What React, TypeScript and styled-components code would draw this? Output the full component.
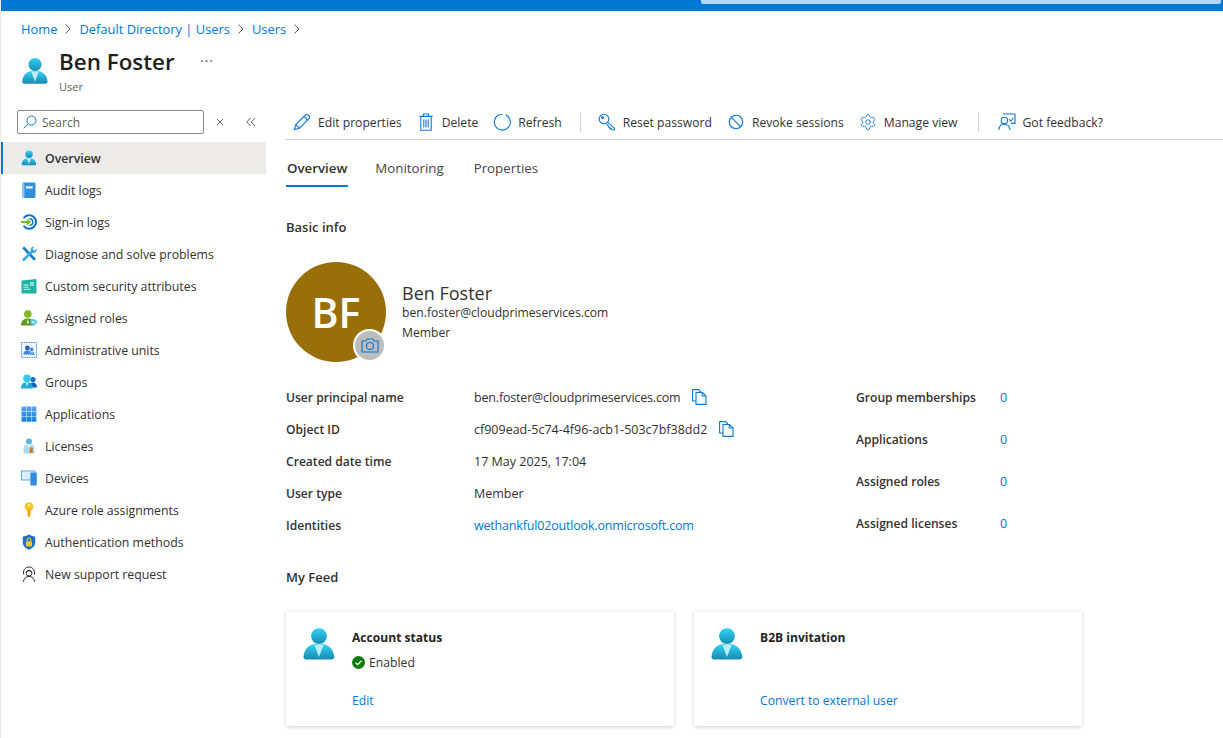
import React from 'react';
import styled, { createGlobalStyle } from 'styled-components';
import { Settings } from 'lucide-react';

const GlobalStyle = createGlobalStyle`
  html, body {
    margin: 0;
    padding: 0;
    height: 100%;
    overflow: hidden;
    background: #ffffff;
  }
  * { box-sizing: border-box; }
  body {
    font-family: "Open Sans", "Noto Sans", "Liberation Sans", sans-serif;
    font-size: 13px;
    color: #323130;
  }
`;

const BLUE = '#0078d4';

const PersonIcon = ({ size = 16, id }: { size?: number; id: string }) => (
  <svg width={size} height={size} viewBox="0 0 18 18">
    <defs>
      <linearGradient id={`${id}-a`} x1="0" y1="0" x2="0" y2="1">
        <stop offset="0" stopColor="#32d4f5" />
        <stop offset="1" stopColor="#198ab3" />
      </linearGradient>
      <linearGradient id={`${id}-b`} x1="0" y1="0" x2="0" y2="1">
        <stop offset="0" stopColor="#32d4f5" />
        <stop offset="1" stopColor="#1988b1" />
      </linearGradient>
    </defs>
    <path d="M15.7 17.2c.8 0 1.400-.6 1.400-1.400v-.2C16.500 11.700 14.300 8.900 9 8.900s-7.600 2.400-8.200 6.700c-.1.8.5 1.500 1.300 1.600h13.600z" fill={`url(#${id}-b)`} />
    <circle cx="9" cy="4.800" r="4.200" fill={`url(#${id}-a)`} />
    <path d="M9 15.900 6.600 9.500c.8-.3 1.600-.4 2.400-.4s1.600.1 2.400.4z" fill="#d5f5fb" opacity=".85" />
  </svg>
);

const AuditIcon = () => (
  <svg width="16" height="16" viewBox="0 0 16 16">
    <rect x="1.500" y="0.500" width="13" height="15.500" rx="1.400" fill="#2f8fdc" />
    <rect x="1.500" y="0.500" width="2" height="15.500" rx="1" fill="#8cc2ee" />
    <rect x="5" y="4.200" width="6.800" height="2.400" fill="#e8f3fc" />
  </svg>
);

const SignInIcon = () => (
  <svg width="16" height="16" viewBox="0 0 16 16" fill="none">
    <path d="M2.600 4.200A6.800 6.800 0 1 1 2.600 11.800" stroke="#0b6fc2" strokeWidth="2" />
    <path d="M8.500 4.700A3.300 3.300 0 0 1 8.500 11.300" stroke="#0b6fc2" strokeWidth="1.400" />
    <path d="M0 8h8.600M6 5.400 8.800 8 6 10.600" stroke="#76b82a" strokeWidth="1.800" />
  </svg>
);

const ToolsIcon = () => (
  <svg width="16" height="16" viewBox="0 0 16 16" fill="none">
    <path d="M2.200 1.400 14 13.800" stroke="#1c7fc9" strokeWidth="2.800" />
    <path d="M13.600 0.400a3.800 3.800 0 0 0-3.900 4.800L1 13.600l1.800 2 8.300-8.400a3.800 3.800 0 0 0 4.600-4.400l-2.200 2-1.900-1.800z" fill="#3ba7e6" />
  </svg>
);

const AttrIcon = () => (
  <svg width="16" height="16" viewBox="0 0 16 16">
    <path d="M0.500 2.500 15.500 1v13.400a1 1 0 0 1-1 1h-14z" fill="#1fb5a3" />
    <circle cx="11" cy="6" r="2" fill="#e8fbf8" />
    <circle cx="11" cy="6" r="1" fill="#1fb5a3" />
    <rect x="2.500" y="6.400" width="5" height="1" fill="#c8f3ec" />
    <rect x="2.500" y="8.600" width="5" height="1" fill="#c8f3ec" />
    <rect x="2.500" y="10.800" width="7" height="1" fill="#c8f3ec" />
  </svg>
);

const RolesIcon = () => (
  <svg width="16" height="16" viewBox="0 0 16 16">
    <circle cx="6.800" cy="4" r="3.800" fill="#7fba22" />
    <path d="M0 15.500c0-4.200 2.400-6.900 6.800-6.900S13.600 11.300 13.600 15.500z" fill="#5e9624" />
    <path d="M6.800 8.800 5.600 12.600 6.800 14l1.200-1.400z" fill="#d7efb0" />
    <path d="M9.300 10.200 12.200 8.800l3.600 1.600v3L12.200 15.600l-2.900-2z" fill="#50c7ee" />
    <path d="M10.800 11.200h3v2h-3z" fill="#bfeefb" />
  </svg>
);

const UnitsIcon = () => (
  <svg width="16" height="16" viewBox="0 0 16 16">
    <rect x="0.500" y="0.500" width="15" height="15" fill="#eef5fc" stroke="#3d8fdc" strokeDasharray="1.400 1" />
    <circle cx="6.400" cy="6" r="2.400" fill="#2364b8" />
    <path d="M2.400 12.600c0-2.800 1.800-4.200 4-4.200s4 1.400 4 4.200z" fill="#3f84db" />
    <circle cx="10.600" cy="7.400" r="1.900" fill="#4c8fe0" />
    <path d="M7.400 13c0-2.200 1.200-3.400 3.200-3.400s3.200 1.200 3.200 3.400z" fill="#6aa6e8" />
  </svg>
);

const GroupsIcon = () => (
  <svg width="16" height="16" viewBox="0 0 16 16">
    <circle cx="12" cy="5.600" r="2.600" fill="#1a6fd0" />
    <path d="M8.400 13.600c0-3.400 1.400-5 3.600-5s4 1.600 4 5z" fill="#1560b8" />
    <circle cx="6" cy="4.400" r="3.800" fill="#32c5ee" />
    <path d="M0 14.600c0-4.400 2.200-6.400 6-6.400s6 2 6 6.400z" fill="#22aad6" />
    <path d="M6 12.800 4.800 8.500h2.400z" fill="#d5f5fb" />
  </svg>
);

const AppsIcon = () => (
  <svg width="16" height="16" viewBox="0 0 16 16">
    <defs>
      <linearGradient id="apps-grad" x1="0" y1="0" x2="0" y2="16" gradientUnits="userSpaceOnUse">
        <stop offset="0" stopColor="#5ea7ee" />
        <stop offset="1" stopColor="#0d7ee0" />
      </linearGradient>
    </defs>
    {[0.500, 5.600, 10.700].flatMap(x =>
      [0.500, 5.700, 10.900].map(y => (
        <rect key={`${x}-${y}`} x={x} y={y} width="4.700" height="4.800" fill="url(#apps-grad)" />
      ))
    )}
  </svg>
);

const LicenseIcon = () => (
  <svg width="16" height="16" viewBox="0 0 16 16">
    <circle cx="8" cy="3.400" r="3" fill="#5eb4dc" />
    <path d="M2.600 15.600V9.400c0-1.400 1-2.400 2.400-2.400h6c1.400 0 2.400 1 2.400 2.400v6.200z" fill="#a6dcef" />
    <path d="M6.400 7.200 8.200 10l1.600-2.800z" fill="#e9f7fc" />
    <circle cx="10.200" cy="10.800" r="1.800" fill="#e8842a" />
    <path d="M8.800 11.600h2.800v4l-1.400-1-1.400 1z" fill="#d8681b" />
  </svg>
);

const DevicesIcon = () => (
  <svg width="16" height="16" viewBox="0 0 16 16">
    <rect x="0" y="0.500" width="14.400" height="10" fill="#5ea7e6" />
    <rect x="1" y="1.500" width="12.400" height="8" fill="#d9edfb" />
    <rect x="9.400" y="2.600" width="6.400" height="13" rx=".8" fill="#2f8be0" />
  </svg>
);

const KeyIcon = () => (
  <svg width="16" height="16" viewBox="0 0 16 16">
    <circle cx="8" cy="4.600" r="4.400" fill="#fcc419" />
    <path d="M6.500 7h3v5.200l-.8.8.6.8-1.300 1.800-1.500-1.400z" fill="#f2a50c" />
    <circle cx="8" cy="3.200" r="1.200" fill="#ffe99a" />
  </svg>
);

const ShieldIcon = () => (
  <svg width="16" height="16" viewBox="0 0 16 16">
    <path d="M8 0.300c1.600 1.400 3.600 2 6.200 2.200v6.200c0 3.400-3 5.600-6.200 7-3.200-1.400-6.200-3.600-6.200-7V2.500C4.400 2.300 6.400 1.700 8 0.300z" fill="#1f6fc4" />
    <path d="M5 7.400h6v5H5z" fill="#f8c72e" />
    <path d="M6.200 7.400V5.800a1.800 1.800 0 0 1 3.600 0v1.600" stroke="#f8c72e" strokeWidth="1.100" fill="none" />
  </svg>
);

const SupportIcon = () => (
  <svg width="16" height="16" viewBox="0 0 16 16" fill="none" stroke="#323130" strokeWidth="1">
    <path d="M2.800 8.600A5.600 5.600 0 1 1 13.200 8.600" />
    <path d="M5 6.800A3.200 3.200 0 0 1 11 6.800" />
    <circle cx="8" cy="7.200" r="2.800" />
    <path d="M2.400 15.800c.3-3.200 2.600-5.400 5.600-5.400s5.300 2.200 5.600 5.400" />
  </svg>
);

const NAV = [
  { label: 'Overview', icon: <PersonIcon id="nav" />, active: true },
  { label: 'Audit logs', icon: <AuditIcon /> },
  { label: 'Sign-in logs', icon: <SignInIcon /> },
  { label: 'Diagnose and solve problems', icon: <ToolsIcon /> },
  { label: 'Custom security attributes', icon: <AttrIcon /> },
  { label: 'Assigned roles', icon: <RolesIcon /> },
  { label: 'Administrative units', icon: <UnitsIcon /> },
  { label: 'Groups', icon: <GroupsIcon /> },
  { label: 'Applications', icon: <AppsIcon /> },
  { label: 'Licenses', icon: <LicenseIcon /> },
  { label: 'Devices', icon: <DevicesIcon /> },
  { label: 'Azure role assignments', icon: <KeyIcon /> },
  { label: 'Authentication methods', icon: <ShieldIcon /> },
  { label: 'New support request', icon: <SupportIcon /> },
];

const Line = ({ children, w = 18 }: { children: React.ReactNode; w?: number }) => (
  <svg width={w} height={w} viewBox="0 0 18 18" fill="none" stroke="#0f78d4" strokeWidth="1.100">
    {children}
  </svg>
);

const TOOLBAR_LEFT = [
  {
    label: 'Edit properties',
    icon: (
      <Line>
        <path d="M1.500 16.500 2.800 11.600 12.400 2a1.800 1.800 0 0 1 2.600 0l1 1a1.800 1.800 0 0 1 0 2.600L6.400 15.200z" />
        <path d="M2.800 11.600 6.400 15.200M11 3.400l3.600 3.600" />
      </Line>
    ),
  },
  {
    label: 'Delete',
    icon: (
      <Line>
        <path d="M2.400 3.400h13.200M6.400 3.400V1h5.200v2.400M3.800 3.400v13.800h10.400V3.400M6.800 6.400v8M9 6.400v8M11.200 6.400v8" />
      </Line>
    ),
  },
  {
    label: 'Refresh',
    icon: (
      <Line>
        <path d="M6.600 1.600A8 8 0 1 0 12.600 1.800" />
        <path d="M6.900 1.300 9.300 1.700" />
      </Line>
    ),
  },
];

const TOOLBAR_MID = [
  {
    label: 'Reset password',
    icon: (
      <Line>
        <circle cx="6" cy="6" r="4.800" />
        <path d="M9.600 9.200 16.600 15.400v1.400h-2.400l-1-1.200h-1.400v-1.400l-1.400-.2-.2-1.400-1.600-1.400" />
        <circle cx="4.600" cy="4.600" r="1" />
      </Line>
    ),
  },
  {
    label: 'Revoke sessions',
    icon: (
      <Line w={16}>
        <circle cx="9" cy="9" r="7.600" strokeWidth="1.300" />
        <path d="M3.800 3.800 14.200 14.200" strokeWidth="1.300" />
      </Line>
    ),
  },
  {
    label: 'Manage view',
    icon: <Settings size={18} color="#0f78d4" strokeWidth={1.200} />,
  },
];

const FEEDBACK = (
  <Line>
    <circle cx="6.400" cy="7.400" r="3.200" />
    <path d="M0.800 17c.2-3.600 2.400-5.800 5.600-5.800s5.200 2.200 5.600 5.800" />
    <path d="M5 1h12v9.400h-4M11 6.400l1.800 1.600 2.600-2.800" />
  </Line>
);

const INFO_ROWS: { label: string; value: string; copy?: boolean; link?: boolean; tight?: boolean }[] = [
  { label: 'User principal name', value: 'ben.foster@cloudprimeservices.com', copy: true, tight: true },
  { label: 'Object ID', value: 'cf909ead-5c74-4f96-acb1-503c7bf38dd2', copy: true },
  { label: 'Created date time', value: '17 May 2025, 17:04' },
  { label: 'User type', value: 'Member' },
  { label: 'Identities', value: 'wethankful02outlook.onmicrosoft.com', link: true, tight: true },
];

const COUNTS = ['Group memberships', 'Applications', 'Assigned roles', 'Assigned licenses'];

const Chevron = () => (
  <svg width="8" height="12" viewBox="0 0 8 12" fill="none" stroke="#605e5c" strokeWidth="1">
    <path d="M1.500 1.500 6 6l-4.500 4.500" />
  </svg>
);

const CopyIcon = () => (
  <svg width="15" height="16" viewBox="0 0 15 16" fill="none" stroke="#0f78d4" strokeWidth="1.100">
    <path d="M4 12H.6V.6h6L9 3" />
    <path d="M4 3.500h6.500l3.500 3.500v8.400H4zM10.200 3.500V7H14" />
  </svg>
);

export default function App() {
  return (
    <Page>
      <GlobalStyle />
      <TopBar>
        <TopSearch />
      </TopBar>
      <Breadcrumb>
        <Crumb>Home</Crumb>
        <Chevron />
        <Crumb>Default Directory | Users</Crumb>
        <Chevron />
        <Crumb>Users</Crumb>
        <Chevron />
      </Breadcrumb>
      <Header>
        <PersonIcon size={28} id="head" />
        <HeaderText>
          <Title>Ben Foster</Title>
          <SubTitle>User</SubTitle>
        </HeaderText>
        <Dots>···</Dots>
      </Header>
      <Body>
        <Sidebar>
          <SideTools>
            <SearchBox>
              <svg width="14" height="14" viewBox="0 0 14 14" fill="none" stroke="#0f78d4" strokeWidth="1">
                <circle cx="8.500" cy="5.500" r="4.500" />
                <path d="M5.200 8.800.8 13.200" />
              </svg>
              <span>Search</span>
            </SearchBox>
            <SideGlyph>
              <svg width="8" height="8" viewBox="0 0 8 8" fill="none" stroke="#605e5c">
                <path d="M1 1l6 6M7 1 1 7" />
              </svg>
            </SideGlyph>
            <SideGlyph>
              <svg width="10" height="10" viewBox="0 0 10 10" fill="none" stroke="#605e5c">
                <path d="M4.500 1 .8 5l3.700 4M9 1 5.300 5 9 9" />
              </svg>
            </SideGlyph>
          </SideTools>
          <Nav>
            {NAV.map(item => (
              <NavItem key={item.label} $active={item.active}>
                <NavIcon>{item.icon}</NavIcon>
                {item.label}
              </NavItem>
            ))}
          </Nav>
        </Sidebar>
        <Main>
          <Toolbar>
            {TOOLBAR_LEFT.map(b => (
              <ToolButton key={b.label}>
                <ToolIcon>{b.icon}</ToolIcon>
                {b.label}
              </ToolButton>
            ))}
            <ToolDivider />
            {TOOLBAR_MID.map(b => (
              <ToolButton key={b.label}>
                <ToolIcon>{b.icon}</ToolIcon>
                {b.label}
              </ToolButton>
            ))}
            <ToolDivider $wide />
            <ToolButton>
              <ToolIcon>{FEEDBACK}</ToolIcon>
              Got feedback?
            </ToolButton>
          </Toolbar>
          <Tabs>
            <Tab $active>Overview</Tab>
            <Tab>Monitoring</Tab>
            <Tab>Properties</Tab>
          </Tabs>
          <SectionTitle>Basic info</SectionTitle>
          <Profile>
            <Avatar>
              BF
              <CameraBadge>
                <svg width="18" height="15" viewBox="0 0 18 15" fill="none" stroke="#0f78d4" strokeWidth="1.200">
                  <path d="M1 3h4l1-2h6l1 2h4v11H1z" />
                  <circle cx="9" cy="8" r="3.500" />
                </svg>
              </CameraBadge>
            </Avatar>
            <ProfileText>
              <ProfileName>Ben Foster</ProfileName>
              <ProfileLine>ben.foster@cloudprimeservices.com</ProfileLine>
              <ProfileRole>Member</ProfileRole>
            </ProfileText>
          </Profile>
          <Details>
            <InfoTable>
              {INFO_ROWS.map(row => (
                <InfoRow key={row.label}>
                  <InfoLabel>{row.label}</InfoLabel>
                  <InfoValue $link={row.link} $tight={row.tight}>
                    <span>{row.value}</span>
                    {row.copy && <CopyIcon />}
                  </InfoValue>
                </InfoRow>
              ))}
            </InfoTable>
            <Counts>
              {COUNTS.map(label => (
                <CountRow key={label}>
                  <InfoLabel>{label}</InfoLabel>
                  <CountValue>0</CountValue>
                </CountRow>
              ))}
            </Counts>
          </Details>
          <FeedTitle>My Feed</FeedTitle>
          <Cards>
            <Card>
              <PersonIcon size={34} id="c1" />
              <CardBody>
                <CardTitle>Account status</CardTitle>
                <CardStatus>
                  <svg width="13" height="13" viewBox="0 0 13 13">
                    <circle cx="6.500" cy="6.500" r="6.500" fill="#107c10" />
                    <path d="M3.600 6.800 5.600 8.700 9.400 4.800" fill="none" stroke="#fff" strokeWidth="1.300" />
                  </svg>
                  Enabled
                </CardStatus>
                <CardLink>Edit</CardLink>
              </CardBody>
            </Card>
            <Card>
              <PersonIcon size={34} id="c2" />
              <CardBody>
                <CardTitle>B2B invitation</CardTitle>
                <CardStatus />
                <CardLink>Convert to external user</CardLink>
              </CardBody>
            </Card>
          </Cards>
        </Main>
      </Body>
    </Page>
  );
}

const Page = styled.div`
  width: 1223px;
  height: 738px;
  overflow: hidden;
  border-left: 1px solid #e8e8e8;
`;

const TopBar = styled.div`
  height: 11px;
  background: ${BLUE};
  display: flex;
  justify-content: flex-end;
  padding-right: 2px;
`;

const TopSearch = styled.div`
  width: 520px;
  height: 4px;
  background: #b3d6f5;
  border-radius: 0 0 2px 2px;
`;

const Breadcrumb = styled.div`
  display: flex;
  align-items: center;
  gap: 7px;
  height: 20px;
  margin: 8px 0 0 20px;
`;

const Crumb = styled.span`
  color: ${BLUE};
  font-size: 12.900px;
`;

const Header = styled.div`
  display: flex;
  align-items: flex-start;
  padding: 8px 0 0 20px;
  height: 67px;
  svg { margin-top: 10px; flex: none; }
`;

const HeaderText = styled.div`
  margin-left: 10px;
  width: 140px;
`;

const Title = styled.div`
  font-size: 22.400px;
  font-weight: 600;
  line-height: 30px;
  color: #201f1e;
  white-space: nowrap;
`;

const SubTitle = styled.div`
  margin-top: 2px;
  font-size: 11px;
  line-height: 16px;
  color: #605e5c;
`;

const Dots = styled.span`
  margin: 4px 0 0 1px;
  font-size: 14px;
  letter-spacing: 1px;
  color: #605e5c;
`;

const Body = styled.div`
  display: flex;
  align-items: flex-start;
`;

const Sidebar = styled.aside`
  width: 265px;
  flex: none;
`;

const SideTools = styled.div`
  display: flex;
  align-items: center;
  height: 24px;
  margin: 4px 0 8px 16px;
`;

const SearchBox = styled.div`
  width: 187px;
  height: 24px;
  border: 1px solid #8a8886;
  border-radius: 2px;
  display: flex;
  align-items: center;
  gap: 5px;
  padding-left: 5px;
  font-size: 12px;
  color: #605e5c;
`;

const SideGlyph = styled.div`
  width: 30px;
  display: flex;
  justify-content: center;
  margin-left: 1px;
`;

const Nav = styled.nav`
  display: flex;
  flex-direction: column;
`;

const NavItem = styled.div<{ $active?: boolean }>`
  height: 32px;
  display: flex;
  align-items: center;
  padding-left: ${p => (p.$active ? '18px' : '20px')};
  font-size: 12.300px;
  white-space: nowrap;
  background: ${p => (p.$active ? '#edebe9' : 'transparent')};
  border-left: ${p => (p.$active ? `2px solid ${BLUE}` : 'none')};
  font-weight: ${p => (p.$active ? 600 : 400)};
`;

const NavIcon = styled.span`
  width: 24px;
  display: flex;
  align-items: center;
  flex: none;
`;

const Main = styled.main`
  flex: 1;
  padding-left: 20px;
  margin-top: -1px;
`;

const Toolbar = styled.div`
  display: flex;
  align-items: center;
  height: 35px;
  border-bottom: 1px solid #d2d0ce;
  padding-left: 7px;
`;

const ToolButton = styled.div`
  display: flex;
  align-items: center;
  gap: 7px;
  padding-right: 15px;
  font-size: 12.150px;
  white-space: nowrap;
`;

const ToolIcon = styled.span`
  width: 18px;
  height: 18px;
  display: flex;
  align-items: center;
  justify-content: center;
  flex: none;
`;

const ToolDivider = styled.div<{ $wide?: boolean }>`
  width: 1px;
  height: 20px;
  background: #d2d0ce;
  margin: 0 ${p => (p.$wide ? '19px' : '17px')} 0 ${p => (p.$wide ? '5px' : '3px')};
`;

const Tabs = styled.div`
  display: flex;
  height: 47px;
  gap: 26px;
  padding-top: 15px;
`;

const Tab = styled.div<{ $active?: boolean }>`
  height: 32px;
  padding: 4px ${p => (p.$active ? '1px' : '3px')} 0 1px;
  font-size: 13.300px;
  font-weight: ${p => (p.$active ? 600 : 400)};
  color: ${p => (p.$active ? '#323130' : '#484644')};
  border-bottom: ${p => (p.$active ? `2px solid ${BLUE}` : 'none')};
`;

const SectionTitle = styled.div`
  margin-top: 30px;
  font-size: 13px;
  font-weight: 600;
  line-height: 20px;
`;

const Profile = styled.div`
  display: flex;
  align-items: flex-start;
  margin-top: 25px;
`;

const Avatar = styled.div`
  position: relative;
  width: 100px;
  height: 100px;
  border-radius: 50%;
  background: #986f0b;
  color: #fff;
  font-size: 41px;
  font-weight: 600;
  display: flex;
  align-items: center;
  justify-content: center;
`;

const CameraBadge = styled.div`
  position: absolute;
  right: 0;
  bottom: 0;
  width: 33px;
  height: 33px;
  border-radius: 50%;
  background: #bdbdbd;
  border: 2px solid #fff;
  display: flex;
  align-items: center;
  justify-content: center;
`;

const ProfileText = styled.div`
  margin: 19px 0 0 16px;
`;

const ProfileName = styled.div`
  font-size: 18px;
  line-height: 24px;
`;

const ProfileLine = styled.div`
  font-size: 12.150px;
  line-height: 16px;
`;

const ProfileRole = styled.div`
  font-size: 12.150px;
  line-height: 16px;
  margin-top: 4px;
`;

const Details = styled.div`
  display: flex;
  margin-top: 19px;
`;

const InfoTable = styled.div`
  width: 570px;
  flex: none;
`;

const InfoRow = styled.div`
  display: flex;
  align-items: center;
  height: 32px;
`;

const InfoLabel = styled.div`
  width: 188px;
  flex: none;
  font-size: 12.100px;
  font-weight: 600;
  white-space: nowrap;
`;

const InfoValue = styled.div<{ $link?: boolean; $tight?: boolean }>`
  display: flex;
  align-items: center;
  gap: 12px;
  font-size: 12.500px;
  white-space: nowrap;
  letter-spacing: ${p => (p.$tight ? '-0.18px' : '0')};
  color: ${p => (p.$link ? BLUE : '#323130')};
`;

const Counts = styled.div`
  display: flex;
  flex-direction: column;
`;

const CountRow = styled.div`
  display: flex;
  align-items: center;
  height: 42px;
  &:first-child { height: 32px; margin-bottom: 5px; }
  ${InfoLabel} { width: 144px; }
`;

const CountValue = styled.span`
  color: ${BLUE};
  font-size: 12.500px;
`;

const FeedTitle = styled.div`
  margin-top: 23px;
  font-size: 13px;
  font-weight: 600;
  line-height: 20px;
`;

const Cards = styled.div`
  display: flex;
  gap: 20px;
  margin-top: 25px;
`;

const Card = styled.div`
  width: 388px;
  height: 114px;
  background: #fff;
  box-shadow: 0 1px 4px rgba(0, 0, 0, 0.2);
  display: flex;
  padding: 15px 16px;
  svg { flex: none; }
`;

const CardBody = styled.div`
  margin-left: 16px;
  padding-top: 1px;
  display: flex;
  flex-direction: column;
`;

const CardTitle = styled.div`
  font-size: 12.100px;
  font-weight: 700;
  line-height: 20px;
  color: #242424;
`;

const CardStatus = styled.div`
  display: flex;
  align-items: center;
  gap: 4px;
  height: 20px;
  margin-top: 5px;
  font-size: 12.200px;
`;

const CardLink = styled.div`
  margin-top: 19px;
  font-size: 12.200px;
  line-height: 20px;
  color: ${BLUE};
`;
